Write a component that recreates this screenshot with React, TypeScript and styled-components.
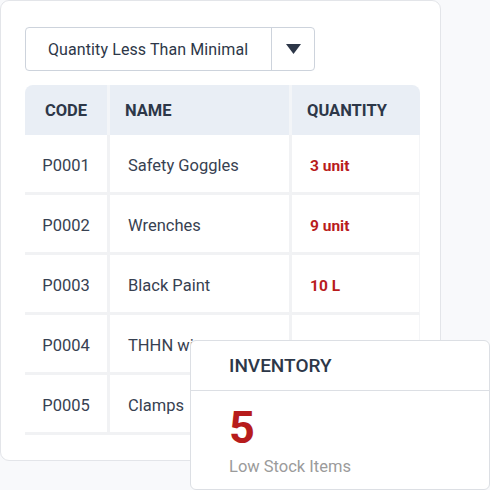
import styled, { createGlobalStyle } from 'styled-components';

const GlobalStyle = createGlobalStyle`
  body {
    margin: 0;
    background: #f8f9fb;
    font-family: Roboto, "Liberation Sans", sans-serif;
  }
`;

const Page = styled.div`
  position: relative;
  width: 490px;
  height: 490px;
  overflow: hidden;
`;

const Card = styled.div`
  box-sizing: border-box;
  width: 441px;
  height: 461px;
  padding: 26px 0 0 24px;
  background: #fff;
  border: 1px solid #e3e5e9;
  border-radius: 9px;
`;

const Select = styled.div`
  display: flex;
  width: 290px;
  height: 44px;
  box-sizing: border-box;
  border: 1px solid #cdd3dc;
  border-radius: 4px;
  margin-bottom: 14px;
`;

const SelectLabel = styled.div`
  flex: 1;
  display: flex;
  align-items: center;
  padding-left: 22px;
  font-size: 16px;
  letter-spacing: 0.1px;
  color: #2d3748;
  border-right: 1px solid #cdd3dc;
`;

const Caret = styled.div`
  width: 42px;
  display: flex;
  align-items: center;
  justify-content: center;
`;

const Table = styled.table`
  width: 395px;
  border-collapse: separate;
  border-spacing: 0;
  table-layout: fixed;
`;

const Th = styled.th<{ $w: number; $center?: boolean; $last?: boolean }>`
  width: ${p => p.$w}px;
  height: 50px;
  padding: 0 0 0 ${p => (p.$center ? 0 : 15)}px;
  box-sizing: border-box;
  background: #e9eef5;
  text-align: ${p => (p.$center ? 'center' : 'left')};
  font-size: 16.5px;
  font-weight: 700;
  color: #2d3748;
  border-right: ${p => (p.$last ? 'none' : '3px solid #f3f5f8')};
  &:first-child {
    border-top-left-radius: 8px;
  }
  &:last-child {
    border-top-right-radius: 8px;
  }
`;

const Td = styled.td<{ $center?: boolean; $last?: boolean; $red?: boolean }>`
  height: 60px;
  box-sizing: border-box;
  padding: 4px 0 0 ${p => (p.$center ? 0 : 18)}px;
  text-align: ${p => (p.$center ? 'center' : 'left')};
  font-size: ${p => (p.$red ? 15.5 : 16.5)}px;
  font-weight: ${p => (p.$red ? 700 : 400)};
  color: ${p => (p.$red ? '#b91c1c' : '#374151')};
  border-bottom: 3px solid #f1f2f4;
  border-right: ${p => (p.$last ? '1px solid #f4f5f7' : '3px solid #f1f2f4')};
  white-space: nowrap;
  overflow: hidden;
`;

const Popup = styled.div`
  position: absolute;
  left: 190px;
  top: 340px;
  width: 300px;
  height: 150px;
  box-sizing: border-box;
  background: #fff;
  border: 1px solid #dcdfe4;
  border-radius: 6px;
`;

const PopupHead = styled.div`
  height: 49px;
  display: flex;
  align-items: center;
  padding-left: 38px;
  font-size: 19px;
  font-weight: 500;
  color: #2d3748;
  border-bottom: 1px solid #dcdfe4;
`;

const PopupBody = styled.div`
  padding: 15px 0 0 38px;
`;

const Count = styled.div`
  font-size: 45px;
  font-weight: 700;
  line-height: 44px;
  color: #b71c1c;
`;

const Caption = styled.div`
  margin-top: 7px;
  font-size: 16.5px;
  color: #9b9b9b;
`;

type Item = { code: string; name: string; qty: string };

const items: Item[] = [
  { code: 'P0001', name: 'Safety Goggles', qty: '3 unit' },
  { code: 'P0002', name: 'Wrenches', qty: '9 unit' },
  { code: 'P0003', name: 'Black Paint', qty: '10 L' },
  { code: 'P0004', name: 'THHN wire', qty: '11 m' },
  { code: 'P0005', name: 'Clamps', qty: '4 unit' },
];

export default function App() {
  return (
    <Page>
      <GlobalStyle />
      <Card>
        <Select>
          <SelectLabel>Quantity Less Than Minimal</SelectLabel>
          <Caret>
            <svg width="15" height="10" viewBox="0 0 15 10">
              <path d="M0 0 H15 L7.5 10 Z" fill="#2d3748" />
            </svg>
          </Caret>
        </Select>
        <Table>
          <thead>
            <tr>
              <Th $w={85} $center>CODE</Th>
              <Th $w={182}>NAME</Th>
              <Th $w={128} $last>QUANTITY</Th>
            </tr>
          </thead>
          <tbody>
            {items.map(item => (
              <tr key={item.code}>
                <Td $center>{item.code}</Td>
                <Td>{item.name}</Td>
                <Td $last $red>{item.qty}</Td>
              </tr>
            ))}
          </tbody>
        </Table>
      </Card>
      <Popup>
        <PopupHead>INVENTORY</PopupHead>
        <PopupBody>
          <Count>5</Count>
          <Caption>Low Stock Items</Caption>
        </PopupBody>
      </Popup>
    </Page>
  );
}
